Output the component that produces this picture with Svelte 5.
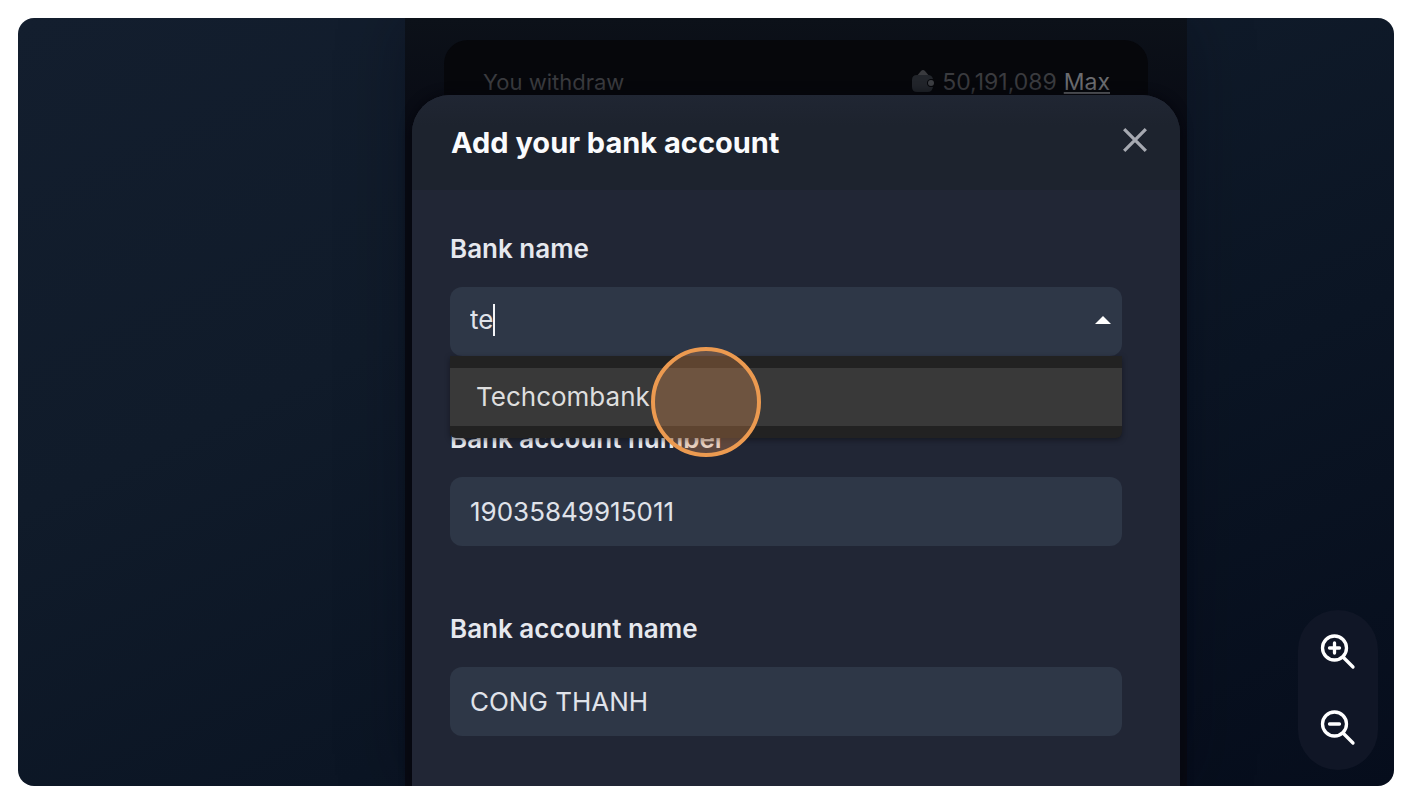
<script lang="ts">
  let bankQuery = $state('te');
  let accountNumber = $state('19035849915011');
  let accountName = $state('CONG THANH');

  const balance = '50,191,089';
  const banks = ['Techcombank'];
</script>

<main class="stage">
  <div class="app">
    <section class="withdraw">
      <span>You withdraw</span>
      <div class="withdraw__balance">
        <svg class="withdraw__wallet" viewBox="0 0 24 24" aria-hidden="true">
          <path class="withdraw__note" d="M5 8 10 2Q12 0 14 2L19 8Z" />
          <path class="withdraw__pouch" d="M6 6H17Q21 6 22 10H19Q16 11 16 14T19 18H22Q21 23 17 23H6Q1 23 1 18V11Q1 6 6 6Z" />
          <circle class="withdraw__clasp" cx="20" cy="14" r="3" />
        </svg>
        <span>{balance}</span>
        <a class="withdraw__max" href="#max">Max</a>
      </div>
    </section>

    <section class="dialog" role="dialog" aria-labelledby="dialog-title">
      <header class="dialog__header">
        <h1 class="dialog__title" id="dialog-title">Add your bank account</h1>
        <button class="dialog__close" type="button" aria-label="Close">
          <svg viewBox="0 0 24 24" aria-hidden="true">
            <path d="M2 2 22 22M22 2 2 22" />
          </svg>
        </button>
      </header>

      <form class="form">
        <div class="field">
          <label class="field__label" for="bank">Bank name</label>
          <div class="combo">
            <div class="field__box combo__box">
              <input
                class="combo__input"
                id="bank"
                role="combobox"
                aria-expanded="true"
                aria-controls="bank-list"
                autocomplete="off"
                spellcheck="false"
                bind:value={bankQuery}
              />
              <span class="combo__caret"></span>
              <svg class="combo__arrow" viewBox="0 0 16 8" aria-hidden="true">
                <path d="M0 8 8 0 16 8Z" />
              </svg>
            </div>
            <ul class="combo__menu" id="bank-list" role="listbox">
              {#each banks as bank}
                <li class="combo__option" role="option" aria-selected="true">{bank}</li>
              {/each}
            </ul>
          </div>
        </div>

        <div class="field">
          <label class="field__label" for="number">Bank account number</label>
          <input class="field__box" id="number" inputmode="numeric" bind:value={accountNumber} />
        </div>

        <div class="field">
          <label class="field__label" for="name">Bank account name</label>
          <input class="field__box" id="name" spellcheck="false" bind:value={accountName} />
        </div>
      </form>
    </section>
  </div>

  <div class="click-marker"></div>

  <div class="zoom">
    <button class="zoom__button" type="button" aria-label="Zoom in">
      <svg viewBox="0 0 36 36" aria-hidden="true">
        <circle cx="14.500" cy="14" r="12" />
        <path d="M23 23 33 33M14.500 9V19M9.500 14H19.500" />
      </svg>
    </button>
    <button class="zoom__button" type="button" aria-label="Zoom out">
      <svg viewBox="0 0 36 36" aria-hidden="true">
        <circle cx="14.500" cy="14" r="12" />
        <path d="M23 23 33 33M9.500 14H19.500" />
      </svg>
    </button>
  </div>
</main>

<style>
  :global(body) {
    margin: 0;
    background: #fff;
  }

  .stage {
    position: relative;
    display: grid;
    grid-template-columns: 387fr 782fr 207fr;
    box-sizing: border-box;
    min-height: calc(100vh - 34px);
    margin: 18px 16px 16px 18px;
    border-radius: 16px;
    overflow: hidden;
    background: linear-gradient(155deg, #131e2e 0%, #101b2a 35%, #0b1524 65%, #060d1c 100%);
    color: #e6e8ee;
    font-family: Inter, sans-serif;
    font-size: 26px;
    line-height: 32px;
  }

  .app {
    grid-column: 2;
    display: flex;
    flex-direction: column;
    padding: 22px 7px 0;
    background: linear-gradient(#0c1119, #080a13 120px);
    box-shadow: 0 0 64px rgba(2, 8, 18, 0.3);
  }

  .withdraw {
    display: flex;
    justify-content: space-between;
    height: 48px;
    margin: 0 32px;
    padding: 26px 38px 16px 39px;
    border-radius: 24px;
    background: #06070b;
    color: #3a3b3f;
    font-size: 22px;
  }

  .withdraw__balance {
    display: flex;
    gap: 7px;
    font-size: 23px;
  }

  .withdraw__wallet {
    width: 24px;
    height: 24px;
    margin-top: 3px;
  }

  .withdraw__note {
    fill: #393a3e;
  }

  .withdraw__pouch {
    fill: #22252b;
  }

  .withdraw__clasp {
    fill: #3c3e43;
  }

  .withdraw__max {
    color: #6b6c70;
    text-decoration-thickness: 2px;
    text-underline-offset: 2px;
  }

  .dialog {
    position: relative;
    flex: 1;
    margin-top: -35px;
    border-radius: 38px 38px 0 0;
    overflow: hidden;
    background: #212635;
    box-shadow: 0 0 12px #05060d;
  }

  .dialog__header {
    display: flex;
    align-items: center;
    justify-content: space-between;
    height: 95px;
    padding: 0 32px 0 39px;
    background: linear-gradient(#202633, #1d232e 30px);
  }

  .dialog__title {
    margin: 0;
    color: #fafbfd;
    font-size: 29px;
    font-weight: 700;
  }

  .dialog__close {
    display: flex;
    padding: 0 0 6px;
    border: 0;
    background: none;
  }

  .dialog__close svg {
    width: 26px;
    height: 26px;
    fill: none;
    stroke: #a6a9b1;
    stroke-width: 3;
  }

  .form {
    display: flex;
    flex-direction: column;
    gap: 67px;
    padding: 43px 58px 49px 38px;
  }

  .field {
    display: flex;
    flex-direction: column;
    gap: 22px;
  }

  .field__label {
    font-weight: 600;
  }

  .field__box {
    display: flex;
    align-items: center;
    box-sizing: border-box;
    width: 100%;
    height: 69px;
    padding: 0 20px;
    border: 0;
    border-radius: 12px;
    outline: 0;
    background: #2e3747;
    color: #e0e3ea;
    font: inherit;
  }

  .combo {
    position: relative;
  }

  .combo__box {
    padding: 0 11px 3px 20px;
  }

  .combo__input {
    field-sizing: content;
    padding: 0;
    border: 0;
    outline: 0;
    background: none;
    color: inherit;
    font: inherit;
  }

  .combo__caret {
    width: 2px;
    height: 32px;
    background: #f4f5f8;
  }

  .combo__arrow {
    width: 16px;
    height: 8px;
    margin-left: auto;
    fill: #fff;
  }

  .combo__menu {
    position: absolute;
    top: 100%;
    right: 0;
    left: 0;
    margin: 0;
    padding: 12px 0;
    border-radius: 0 0 6px 6px;
    background: #222;
    box-shadow: 0 2px 5px rgba(10, 12, 18, 0.5);
    list-style: none;
  }

  .combo__option {
    padding: 13px 26px;
    background: #393939;
    color: #dedede;
  }

  .click-marker {
    position: absolute;
    top: 50%;
    left: 50%;
    box-sizing: border-box;
    width: 110px;
    height: 110px;
    border: 4px solid #ec9a50;
    border-radius: 50%;
    background: rgba(236, 148, 84, 0.3);
    transform: translate(-50%, -50%);
    pointer-events: none;
  }

  .zoom {
    position: absolute;
    right: 16px;
    bottom: 16px;
    display: flex;
    flex-direction: column;
    gap: 12px;
    padding: 10px 8px;
    border-radius: 40px;
    background: #101626;
  }

  .zoom__button {
    display: flex;
    align-items: center;
    justify-content: center;
    width: 64px;
    height: 64px;
    padding: 0;
    border: 0;
    background: none;
  }

  .zoom__button svg {
    width: 36px;
    height: 36px;
    fill: none;
    stroke: #fff;
    stroke-width: 3.3;
    stroke-linecap: round;
  }
</style>
